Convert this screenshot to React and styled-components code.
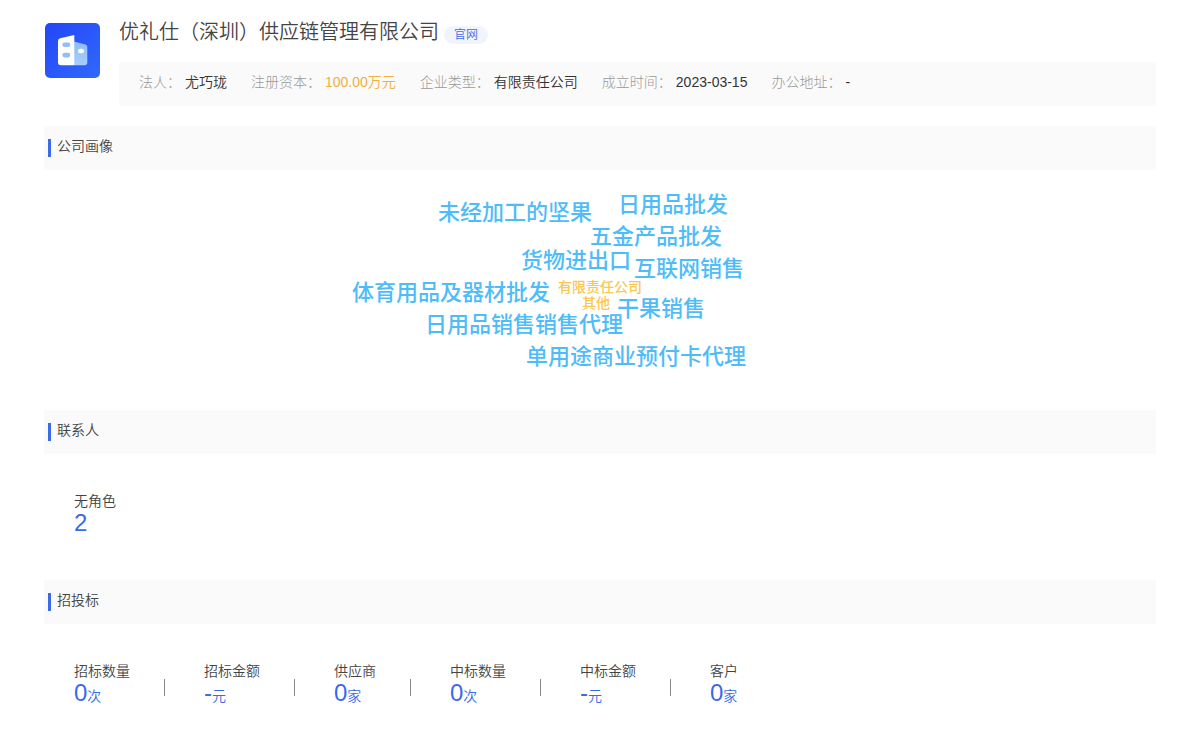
import React from 'react'
import styled, { createGlobalStyle } from 'styled-components'

const infos = [
    { label: '法人：', value: '尤巧珑' },
    { label: '注册资本：', value: '100.00万元', color: '#efaf41' },
    { label: '企业类型：', value: '有限责任公司' },
    { label: '成立时间：', value: '2023-03-15' },
    { label: '办公地址：', value: '-' },
]

// x is measured from the middle of the cloud, y from its top
const words = [
    { text: '未经加工的坚果', x: -162, y: 27 },
    { text: '日用品批发', x: 18, y: 19 },
    { text: '五金产品批发', x: -10, y: 51 },
    { text: '货物进出口', x: -79, y: 75 },
    { text: '互联网销售', x: 34, y: 83 },
    { text: '体育用品及器材批发', x: -248, y: 107 },
    { text: '有限责任公司', x: -42, y: 106, small: true },
    { text: '其他', x: -18, y: 122, small: true },
    { text: '干果销售', x: 17, y: 123 },
    { text: '日用品销售销售代理', x: -175, y: 139 },
    { text: '单用途商业预付卡代理', x: -74, y: 171 },
]

const contacts = [{ label: '无角色', value: '2', unit: '' }]

const bids = [
    { label: '招标数量', value: '0', unit: '次' },
    { label: '招标金额', value: '-', unit: '元' },
    { label: '供应商', value: '0', unit: '家' },
    { label: '中标数量', value: '0', unit: '次' },
    { label: '中标金额', value: '-', unit: '元' },
    { label: '客户', value: '0', unit: '家' },
]

function Logo(){
    return(
        <LogoBox viewBox="0 0 55 55" role="img" aria-label="公司">
            <defs>
                <linearGradient id="logoBg" x1="0" y1="0" x2="1" y2="1">
                    <stop offset="0" stopColor="#2346f8"/>
                    <stop offset="1" stopColor="#3169fc"/>
                </linearGradient>
                <linearGradient id="logoSide" x1="0" y1="0" x2="0" y2="1">
                    <stop offset="0" stopColor="#8dbcfa"/>
                    <stop offset="1" stopColor="#a9cdfb"/>
                </linearGradient>
            </defs>
            <rect width="55" height="55" rx="5" fill="url(#logoBg)"/>
            <path d="M29 18.5 L40.5 21.6 Q42.3 22.2 42.3 24 V39.5 Q42.3 42.3 39.5 42.3 H29 Z" fill="url(#logoSide)"/>
            <path d="M29.3 12 V42.3 H15.8 Q13 42.3 13 39.5 V18.2 Q13 15.8 15.2 15.2 Z" fill="#fff"/>
            <rect x="17.3" y="19.4" width="8" height="4.6" rx="2.3" fill="#93bdf8"/>
            <rect x="17.3" y="29.8" width="8" height="4.6" rx="2.3" fill="#93bdf8"/>
            <rect x="33" y="25.8" width="6" height="4.4" rx="2.2" fill="#fff"/>
        </LogoBox>
    )
}

function Stats({ items }){
    return(
        <StatList>
            {items.map((item)=>(
                <Stat key={item.label}>
                    <dt>{item.label}</dt>
                    <dd>{item.value}<span>{item.unit}</span></dd>
                </Stat>
            ))}
        </StatList>
    )
}

function App(){
    return(
        <Page lang="zh-CN">
            <GlobalStyle/>
            <Header>
                <Logo/>
                <Company>
                    <TitleRow>
                        <h1>优礼仕（深圳）供应链管理有限公司</h1>
                        <SiteLink href="#">官网</SiteLink>
                    </TitleRow>
                    <InfoBar>
                        {infos.map(({ label, value, color })=>(
                            <Info key={label} $color={color}>
                                <dt>{label}</dt>
                                <dd>{value}</dd>
                            </Info>
                        ))}
                    </InfoBar>
                </Company>
            </Header>
            <section>
                <SectionTitle>公司画像</SectionTitle>
                <Cloud>
                    {words.map(({ text, x, y, small })=>(
                        <Word key={text} $x={x} $y={y} $small={small}>{text}</Word>
                    ))}
                </Cloud>
            </section>
            <section>
                <SectionTitle>联系人</SectionTitle>
                <Stats items={contacts}/>
            </section>
            <section>
                <SectionTitle>招投标</SectionTitle>
                <Stats items={bids}/>
            </section>
        </Page>
    )
}

const GlobalStyle=createGlobalStyle`
    *{
        box-sizing:border-box;
        margin:0;
        padding:0;
    }
    body{
        background:#fff;
        color:#444;
        font-family:"Liberation Sans","Noto Sans CJK SC",sans-serif;
        font-size:14px;
        font-weight:350;
        line-height:20px;
    }
`;

const Page=styled.main`
    padding:20px 44px 0;
`;

const Header=styled.header`
    display:flex;
    gap:19px;
    padding-left:1px;
    margin-bottom:20px;
`;

const LogoBox=styled.svg`
    flex:none;
    width:55px;
    height:55px;
    margin-top:3px;
`;

const Company=styled.div`
    flex:1;
`;

const TitleRow=styled.div`
    display:flex;
    align-items:flex-start;
    gap:5px;
    height:42px;
    h1{
        font-size:20px;
        font-weight:350;
        line-height:24px;
    }
`;

const SiteLink=styled.a`
    margin-top:6px;
    padding:0 10px;
    border-radius:10px;
    background:#f0f4fd;
    color:#3f6eea;
    font-size:12px;
    line-height:18px;
    text-decoration:none;
`;

const InfoBar=styled.dl`
    display:flex;
    flex-wrap:wrap;
    column-gap:24px;
    padding:10px 20px 14px;
    background:#fafafa;
`;

const Info=styled.div`
    display:flex;
    gap:4px;
    dt{
        color:#999;
        font-weight:300;
    }
    dd{
        color:${({ $color })=>$color || '#333'};
    }
`;

const SectionTitle=styled.h2`
    display:flex;
    align-items:flex-start;
    gap:6px;
    height:44px;
    padding:10px 4px;
    background:#fafafa;
    font-size:14px;
    font-weight:350;
    &::before{
        content:'';
        width:3px;
        height:18px;
        margin-top:3px;
        background:#3a6ae8;
    }
`;

const Cloud=styled.div`
    position:relative;
    height:240px;
`;

const Word=styled.span`
    position:absolute;
    left:calc(50% + ${({ $x })=>$x}px);
    top:${({ $y })=>$y}px;
    color:${({ $small })=>$small ? '#f9c74f' : '#4fbcfa'};
    font-size:${({ $small })=>$small ? 14 : 22}px;
    font-weight:500;
    line-height:${({ $small })=>$small ? 22 : 32}px;
    white-space:nowrap;
`;

const StatList=styled.dl`
    display:flex;
    padding:36px 30px 44px;
`;

const Stat=styled.div`
    position:relative;
    padding-right:74px;
    dt{
        line-height:22px;
    }
    dd{
        height:24px;
        color:#3a6ae8;
        font-size:24px;
        line-height:22px;
    }
    span{
        font-size:14px;
    }
    &:not(:last-child)::after{
        content:'';
        position:absolute;
        right:39px;
        top:19px;
        width:1px;
        height:17px;
        background:#888;
    }
`;

export default App
